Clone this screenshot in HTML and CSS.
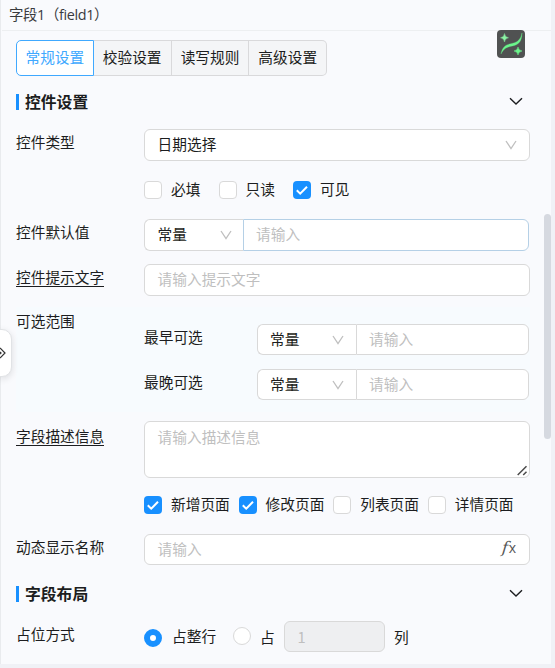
FILE: index.html
```html
<!DOCTYPE html>
<html lang="zh-CN">
<head>
<meta charset="utf-8">
<title>字段1</title>
<link rel="stylesheet" href="styles.css">
</head>
<body>
<svg class="defs" width="0" height="0">
  <symbol id="down" viewBox="0 0 12 10"><path d="M1 1L6 8.5L11 1" fill="none" stroke="currentColor" stroke-width="1.3"/></symbol>
  <symbol id="fold" viewBox="0 0 14 9"><path d="M1 1.3L7 7L13 1.3" fill="none" stroke="currentColor" stroke-width="1.4"/></symbol>
  <symbol id="tick" viewBox="0 0 18 18"><path d="M3.8 9.3L7.2 12.7L14 5.8" fill="none" stroke="#fff" stroke-width="2"/></symbol>
</svg>
<main class="panel">
  <header class="head">字段1（field1）</header>
  <nav class="tabs">
    <span class="tab active">常规设置</span><span class="tab">校验设置</span><span class="tab">读写规则</span><span class="tab">高级设置</span>
  </nav>
  <h2 class="title"><i></i><span>控件设置</span><svg><use href="#fold"/></svg></h2>

  <section class="row type">
    <label>控件类型</label>
    <div class="box select"><span>日期选择</span><svg><use href="#down"/></svg></div>
  </section>
  <div class="checks states">
    <span class="check"></span><span class="name">必填</span>
    <span class="check"></span><span class="name">只读</span>
    <span class="check on"><svg><use href="#tick"/></svg></span><span class="name">可见</span>
  </div>
  <section class="row default">
    <label>控件默认值</label>
    <div class="combo focus"><div class="box select"><span>常量</span><svg><use href="#down"/></svg></div><div class="box hint">请输入</div></div>
  </section>
  <section class="row tip">
    <label><u>控件提示文字</u></label>
    <div class="box hint">请输入提示文字</div>
  </section>
  <section class="row range">
    <label>可选范围</label>
    <div class="limits">
      <div class="limit"><span>最早可选</span><div class="combo"><div class="box select"><span>常量</span><svg><use href="#down"/></svg></div><div class="box hint">请输入</div></div></div>
      <div class="limit"><span>最晚可选</span><div class="combo"><div class="box select"><span>常量</span><svg><use href="#down"/></svg></div><div class="box hint">请输入</div></div></div>
    </div>
  </section>
  <section class="row desc">
    <label><u>字段描述信息</u></label>
    <div class="box hint area">请输入描述信息<svg viewBox="0 0 11 11"><path d="M.7 10L9.5 1.2M6.2 10L9.5 6.7" fill="none" stroke="#4b4b4b" stroke-width="1.5"/></svg></div>
  </section>
  <div class="checks pages">
    <span class="check on"><svg><use href="#tick"/></svg></span><span class="name">新增页面</span>
    <span class="check on"><svg><use href="#tick"/></svg></span><span class="name">修改页面</span>
    <span class="check"></span><span class="name">列表页面</span>
    <span class="check"></span><span class="name">详情页面</span>
  </div>
  <section class="row dynamic">
    <label>动态显示名称</label>
    <div class="box hint">请输入<span class="fx"><em>f</em><small>x</small></span></div>
  </section>
  <h2 class="title second"><i></i><span>字段布局</span><svg><use href="#fold"/></svg></h2>
  <section class="row place">
    <label>占位方式</label>
    <div class="radios">
      <span class="radio on"></span><span class="full">占整行</span>
      <span class="radio"></span><span class="part">占</span>
      <div class="box number">1</div><span class="part">列</span>
    </div>
  </section>
  <div class="assist"><svg viewBox="0 0 28 28">
    <path d="M4 24C5.6 16 9 14.8 14 13.7S23.5 11 25 3C24.8 12.500 21 14.800 15.500 15.900S7 18 4 24Z" fill="#6bf58c" stroke="#6bf58c" stroke-width=".3"/>
    <path d="M7.500 3.500Q8 7.300 11.500 7.800Q8 8.300 7.500 12Q7 8.300 3.500 7.800Q7 7.300 7.500 3.500Z" fill="#8bf5a4" stroke="#8bf5a4" stroke-width=".4"/>
    <path d="M21 17Q21.500 20.500 25 21Q21.500 21.500 21 25Q20.500 21.500 17 21Q20.500 20.500 21 17Z" fill="#6bf58c" stroke="#6bf58c" stroke-width=".5"/>
  </svg></div>
  <div class="drawer"><svg viewBox="0 0 7 12"><path d="M0 1L5 6L0 11M0 5L1 6L0 7" fill="none" stroke="#333" stroke-width="1.200"/></svg></div>
  <div class="scroll"></div>
</main>
</body>
</html>
```
FILE: styles.css
```css
* { box-sizing: border-box; }
body {
  margin: 0;
  height: 668px;
  overflow: hidden;
  background: #f0f1f6;
  color: #1c1d20;
  font: 14.7px/22px "Noto Sans CJK SC", "Liberation Sans", sans-serif;
}
.defs { display: block; }
.panel {
  position: relative;
  width: 551px;
  height: 664px;
  padding: 0 21px 0 15px;
  background: #f9fafd;
  border-left: 1px solid #e9ebee;
}
.head {
  height: 31px;
  margin: 0 -21px 0 -14px;
  padding: 4px 0 0 7px;
  border-bottom: 1px solid #edeff1;
  color: #3a3b3e;
  font-family: "Open Sans", "Noto Sans CJK SC", sans-serif;
  font-size: 14.4px;
  letter-spacing: -.35px;
}
.tabs { display: flex; margin-top: 9px; height: 36px; width: 311px; }
.tab {
  width: 77.700px;
  flex: none;
  border: 1px solid #d9d9db;
  border-left: 0;
  background: #f4f5f7;
  line-height: 32px;
  text-align: center;
}
.tab:nth-child(2) { width: 78px; }
.tab:last-child { border-radius: 0 5px 5px 0; }
.tab.active {
  border: 1px solid #40a9ff;
  border-radius: 5px 0 0 5px;
  background: #fff;
  color: #40a9ff;
}
.title {
  display: flex;
  align-items: center;
  height: 24px;
  margin: 14px 0 0;
  font-size: 15.8px;
  font-weight: 600;
}
.title i { width: 3px; height: 16px; margin-right: 6px; background: #1890ff; }
.title svg { width: 14px; height: 9px; margin: -1px 7px 0 auto; }
.row { display: grid; grid-template-columns: 128px 1fr; }
.row > label { padding-top: 2px; }
u { display: inline-block; height: 21px; border-bottom: 1px solid #1c1d20; text-decoration: none; line-height: 22px; }
.box {
  height: 32px;
  padding: 0 13px 0 12.600px;
  border: 1px solid #d9d9d9;
  border-radius: 6px;
  background: #fff;
  line-height: 28px;
}
.hint { color: #bfbfbf; }
.select { display: flex; align-items: center; justify-content: space-between; }
.select svg { width: 12px; height: 10px; margin-right: -1px; color: #bfbfbf; }
.combo { display: grid; grid-template-columns: 99px 1fr; margin-right: 1px; }
.combo .box:first-child { border-right: 0; border-radius: 6px 0 0 6px; }
.combo .select svg { margin-right: -2px; }
.combo .box:last-child { padding-left: 12px; border-radius: 0 6px 6px 0; }
.focus .box:last-child { border-color: #b5d0e6; }
.select span { margin-top: -2px; }
.type { margin-top: 15px; }
.checks { display: flex; align-items: center; height: 18px; margin-left: 128px; }
.check {
  width: 18px;
  height: 18px;
  flex: none;
  border: 1px solid #d9d9d9;
  border-radius: 4px;
  background: #fff;
}
.check.on { border: 0; background: #1890ff; }
.check svg { display: block; width: 18px; height: 18px; }
.name { margin: -2px 17px 0 9px; white-space: nowrap; }
.states { margin-top: 20px; }
.states .name { width: 30.500px; }
.default { margin-top: 20px; }
.tip { margin-top: 13px; }
.range {
  height: 105px;
  margin-top: 11px;
  padding-top: 1px;
  background: #f7fbfe;
}
.limits { display: grid; gap: 14px; align-content: start; padding-top: 16px; }
.limit { display: grid; grid-template-columns: 113px 1fr; height: 31px; }
.limit > span { margin-top: 2px; }
.limit .box { height: 31px; line-height: 28px; }
.limit .select { padding-left: 12px; }
.limit .select svg { margin-right: -1px; }
.desc { margin-top: 9px; }
.desc > label { padding-top: 4px; }
.area { position: relative; height: 57px; line-height: 30px; }
.area svg { position: absolute; right: 1px; bottom: 1px; width: 11px; height: 11px; }
.pages { margin-top: 18px; }
.pages .name { width: 60px; margin-right: 7.600px; }
.dynamic { margin-top: 20px; }
.dynamic .box { display: flex; justify-content: space-between; height: 31px; line-height: 28px; }
.fx { color: #555; font: 15px/26px "DejaVu Serif", serif; }
.fx em { display: inline-block; font: italic 16px/26px "DejaVu Serif", serif; transform: skewX(-6deg); }
.fx small { margin-left: 1px; font: 14px "Open Sans", sans-serif; }
.second { margin-top: 17px; }
.place { margin-top: 15px; }
.radios { display: flex; align-items: center; height: 31px; }
.radio {
  width: 18px;
  height: 18px;
  margin-top: -2px;
  border: 1px solid #d9d9d9;
  border-radius: 50%;
  background: #fff;
}
.radio.on { margin-top: 2px; border: 6px solid #1890ff; }
.full { width: 44px; margin: -1px 17px 0 10px; white-space: nowrap; }
.part { width: 15px; margin: 1px 9px 0 9px; }
.number { width: 101px; height: 31px; background: #eeeff1; color: #bfbfbf; line-height: 30px; }
.assist { position: absolute; left: 496px; top: 30px; width: 28px; height: 28px; border-radius: 4px; background: #505252; }
.assist svg { display: block; }
.drawer {
  position: absolute;
  left: -2px;
  top: 329px;
  width: 13px;
  height: 48px;
  padding-top: 17px;
  border: 1px solid #e1e3e6;
  border-radius: 0 10px 10px 0;
  background: #fff;
  box-shadow: 0 2px 7px rgba(0, 0, 0, .12);
}
.drawer svg { display: block; width: 7px; height: 12px; overflow: hidden; }
.scroll { position: absolute; right: 0; top: 214px; width: 7px; height: 225px; border-radius: 4px; background: #d6d9e0; }
```
